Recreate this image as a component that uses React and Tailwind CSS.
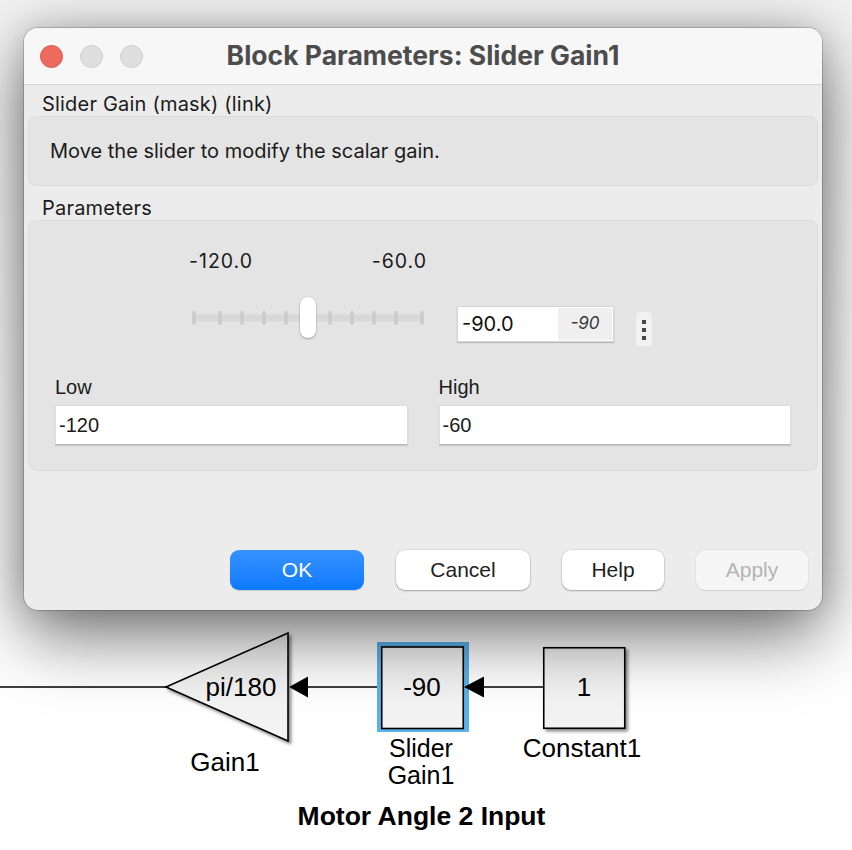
export default function App() {
  const ticks = [5, 31, 53, 75, 97, 141, 163, 185, 207, 233];
  const lib = "Liberation Sans, Arial, sans-serif";
  return (
    <div className="w-[852px] h-[850px] overflow-hidden bg-gradient-to-b from-[#f1f1f1] via-white to-white flex flex-col font-['Liberation_Sans',Arial,sans-serif] text-[#1b1b1b]">
      {/* Window */}
      <div className="relative z-10 ml-[24px] mt-[28px] w-[798px] h-[582px] shrink-0 rounded-[14px] bg-[#ececec] shadow-[0_0_0_1px_rgba(0,0,0,0.18),0_26px_70px_rgba(0,0,0,0.55),0_0_34px_rgba(0,0,0,0.16)] flex flex-col overflow-hidden">
        {/* Title bar */}
        <div className="h-[57px] shrink-0 bg-[#f7f7f7] border-b border-[#d4d4d4] grid grid-cols-[1fr_auto_1fr] items-center">
          <div className="flex items-center gap-[17px] pl-[16px]">
            <span className="w-[23px] h-[23px] rounded-full bg-[#ed6a5e] border border-[#d9594d]" />
            <span className="w-[23px] h-[23px] rounded-full bg-[#dfdfdf] border border-[#cdcdcd]" />
            <span className="w-[23px] h-[23px] rounded-full bg-[#dfdfdf] border border-[#cdcdcd]" />
          </div>
          <div className="font-['Inter',sans-serif] font-bold text-[26.5px] leading-[30px] text-[#4c4c4c] pb-[2px]">
            Block Parameters: Slider Gain1
          </div>
          <div />
        </div>

        {/* Body */}
        <div className="flex-1 flex flex-col px-[4px]">
          <div className="pt-[8px] pl-[14px] text-[20px] tracking-[0.2px] leading-[23px] font-['Inter',sans-serif]">
            Slider Gain (mask) (link)
          </div>
          <div className="h-[70px] rounded-[8px] bg-[#e4e4e4] border border-[#dcdcdc] flex items-center pl-[21px] text-[20px] font-['Inter',sans-serif]">
            Move the slider to modify the scalar gain.
          </div>
          <div className="pt-[11px] pl-[14px] text-[20px] tracking-[0.2px] leading-[23px] font-['Inter',sans-serif]">
            Parameters
          </div>

          {/* Parameters box */}
          <div className="h-[251px] rounded-[8px] bg-[#e4e4e4] border border-[#dcdcdc] flex flex-col pt-[28px]">
            <div className="pl-[160px] flex flex-col">
              <div className="w-[238px] flex justify-between text-[19.5px] tracking-[1px] leading-[24px] font-['Inter',sans-serif]">
                <span>-120.0</span>
                <span>-60.0</span>
              </div>
              <div className="mt-[24px] flex items-start">
                <div className="relative w-[237px] h-[42px]">
                  <svg width="237" height="42" className="block">
                    <rect x="3" y="17.5" width="232" height="7" rx="3.5" fill="#d8d8d8" />
                    {ticks.map((x) => (
                      <rect key={x} x={x - 1.75} y="14" width="3.5" height="14" rx="1.75" fill="#cacaca" />
                    ))}
                  </svg>
                  <div className="absolute left-[111px] top-0 w-[16px] h-[41px] rounded-full bg-white shadow-[0_1px_2px_rgba(0,0,0,0.3),0_0_0_0.5px_rgba(0,0,0,0.08)]" />
                </div>
                <div className="ml-[31px] mt-[9px] w-[157px] h-[36px] bg-white border border-[#d4d4d4] shadow-[0_1px_1px_rgba(0,0,0,0.18)] flex items-stretch p-[1px]">
                  <div className="flex-1 flex items-center pl-[3px] text-[20px] font-['Inter',sans-serif] text-[#111]">-90.0</div>
                  <div className="w-[54px] bg-[#efefef] flex items-center justify-center italic text-[17px] text-[#3a3a3a] font-['Inter',sans-serif]">-90</div>
                </div>
                <div className="ml-[22px] mt-[15px] w-[16px] h-[34px] bg-[#f1f1f1] rounded-t-[5px] flex flex-col items-center pt-[8px] gap-[4px]">
                  <span className="w-[4px] h-[4px] bg-[#474747]" />
                  <span className="w-[4px] h-[4px] bg-[#474747]" />
                  <span className="w-[4px] h-[4px] bg-[#474747]" />
                </div>
              </div>
            </div>

            <div className="mt-[30px] grid grid-cols-2 gap-x-[31px] px-[26px]">
              <div className="flex flex-col">
                <span className="text-[20px] leading-[23px]">Low</span>
                <div className="mt-[6px] h-[40px] bg-white border border-[#dddddd] border-b-[#b9b9b9] shadow-[0_1px_1px_rgba(0,0,0,0.12)] flex items-center pl-[3px] text-[20px]">
                  -120
                </div>
              </div>
              <div className="flex flex-col">
                <span className="text-[20px] leading-[23px]">High</span>
                <div className="mt-[6px] h-[40px] bg-white border border-[#dddddd] border-b-[#b9b9b9] shadow-[0_1px_1px_rgba(0,0,0,0.12)] flex items-center pl-[3px] text-[20px]">
                  -60
                </div>
              </div>
            </div>
          </div>

          {/* Buttons */}
          <div className="mt-auto pb-[20px] pr-[10px] flex justify-end gap-[32px] text-[21px]">
            <button className="w-[134px] h-[40px] rounded-[9px] bg-gradient-to-b from-[#3592ff] to-[#0a79ff] text-white shadow-[0_1px_1px_rgba(0,0,0,0.15)]">
              OK
            </button>
            <button className="w-[134px] h-[40px] rounded-[9px] bg-white text-[#1e1e1e] shadow-[0_0_0_0.5px_rgba(0,0,0,0.12),0_1px_2px_rgba(0,0,0,0.25)]">
              Cancel
            </button>
            <button className="w-[102px] h-[40px] rounded-[9px] bg-white text-[#1e1e1e] shadow-[0_0_0_0.5px_rgba(0,0,0,0.12),0_1px_2px_rgba(0,0,0,0.25)]">
              Help
            </button>
            <button className="w-[112px] h-[40px] rounded-[9px] bg-[#f5f5f5] text-[#b4b4b4] shadow-[0_0_0_0.5px_rgba(0,0,0,0.06),0_1px_1px_rgba(0,0,0,0.08)]">
              Apply
            </button>
          </div>
        </div>
      </div>

      {/* Simulink diagram */}
      <svg width="852" height="240" viewBox="0 610 852 240" className="block shrink-0">
        <defs>
          <filter id="sh" x="-20%" y="-20%" width="150%" height="150%">
            <feDropShadow dx="2.5" dy="2.5" stdDeviation="1.5" floodColor="#000" floodOpacity="0.45" />
          </filter>
        </defs>
        <line x1="0" y1="687" x2="166" y2="687" stroke="#000" strokeWidth="1.3" />
        <polygon points="166,687 288,633 288,741" fill="#f3f3f3" stroke="#000" strokeWidth="1.6" strokeLinejoin="miter" filter="url(#sh)" />
        <text x="241" y="696" textAnchor="middle" fontSize="26" fontFamily={lib} fill="#000">pi/180</text>
        <polygon points="289,687 308,676.5 308,697.5" fill="#000" />
        <line x1="308" y1="687" x2="381" y2="687" stroke="#000" strokeWidth="1.3" />
        <rect x="377" y="642" width="92" height="90" fill="#5cb1e9" />
        <rect x="381.75" y="647" width="81.5" height="81.5" fill="#f3f3f3" stroke="#000" strokeWidth="1.6" />
        <text x="422" y="696" textAnchor="middle" fontSize="26" fontFamily={lib} fill="#000">-90</text>
        <polygon points="464,687 484,676.5 484,697.5" fill="#000" />
        <line x1="484" y1="687" x2="543" y2="687" stroke="#000" strokeWidth="1.3" />
        <rect x="543.75" y="647.75" width="81" height="80.5" fill="#f3f3f3" stroke="#000" strokeWidth="1.6" filter="url(#sh)" />
        <text x="584" y="696" textAnchor="middle" fontSize="26" fontFamily={lib} fill="#000">1</text>
        <text x="225" y="771" textAnchor="middle" fontSize="26" fontFamily={lib} fill="#000">Gain1</text>
        <text x="421" y="757" textAnchor="middle" fontSize="25" fontFamily={lib} fill="#000">Slider</text>
        <text x="421" y="784" textAnchor="middle" fontSize="25" fontFamily={lib} fill="#000">Gain1</text>
        <text x="582" y="757" textAnchor="middle" fontSize="26" fontFamily={lib} fill="#000">Constant1</text>
        <text x="421.5" y="825" textAnchor="middle" fontSize="26.5" fontWeight="bold" fontFamily={lib} fill="#000">Motor Angle 2 Input</text>
      </svg>
    </div>
  );
}
